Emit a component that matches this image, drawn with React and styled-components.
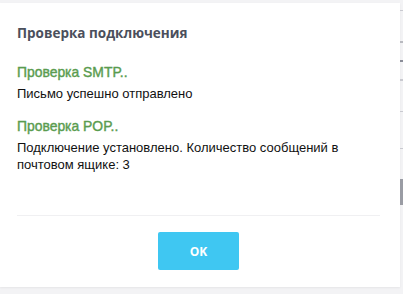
import React from "react";
import styled, { createGlobalStyle } from "styled-components";

const GlobalStyle = createGlobalStyle`
  html, body {
    margin: 0;
    padding: 0;
    background: #f3f3f5;
  }
  body {
    font-family: "Liberation Sans", Arial, sans-serif;
  }
`;

const Page = styled.div`
  width: 403px;
  height: 294px;
  display: flex;
  align-items: flex-start;
  padding-top: 3px;
  box-sizing: border-box;
`;

const Modal = styled.div`
  width: 400px;
  height: 284px;
  background: #ffffff;
  box-shadow: 0 1px 2px rgba(0, 0, 0, 0.06);
  display: flex;
  flex-direction: column;
  box-sizing: border-box;
  padding: 0 20px 0 17px;
`;

const Title = styled.h3`
  margin: 21px 0 0;
  font-family: "Open Sans", sans-serif;
  font-size: 13.5px;
  font-weight: 700;
  color: #4b4f5c;
  line-height: 18px;
`;

const Body = styled.div`
  margin-top: 21px;
  flex: 1;
  display: flex;
  flex-direction: column;
`;

const Step = styled.div`
  display: flex;
  flex-direction: column;
  margin-bottom: ${(p) => p.gap || 0}px;
`;

const StepTitle = styled.div`
  font-size: 13.9px;
  font-weight: 400;
  -webkit-text-stroke: 0.4px #5a9c4f;
  color: #5a9c4f;
  line-height: 18px;
  margin-bottom: 4px;
`;

const StepText = styled.div`
  font-size: 13px;
  color: #111111;
  line-height: 17px;
`;

const Footer = styled.div`
  border-top: 1px solid #f0f0f2;
  height: 72px;
  display: flex;
  justify-content: center;
  align-items: flex-start;
  padding-top: 16px;
  box-sizing: border-box;
`;

const Button = styled.button`
  width: 81px;
  height: 38px;
  border: none;
  border-radius: 2px;
  background: #3fc7f2;
  color: #ffffff;
  font-family: "Open Sans", sans-serif;
  font-size: 12px;
  font-weight: 700;
  cursor: pointer;
`;

const SideMarks = styled.div`
  position: relative;
  flex: 1;
  height: 100%;
`;

const Mark = styled.div`
  position: absolute;
  left: 0;
  right: 0;
  top: ${(p) => p.top}px;
  height: ${(p) => p.h || 1}px;
  background: ${(p) => p.color || "#c9cad0"};
`;

export default function App() {
  return (
    <>
      <GlobalStyle />
      <Page>
        <Modal>
          <Title>Проверка подключения</Title>
          <Body>
            <Step gap={15}>
              <StepTitle>Проверка SMTP..</StepTitle>
              <StepText>Письмо успешно отправлено</StepText>
            </Step>
            <Step>
              <StepTitle>Проверка POP..</StepTitle>
              <StepText>
                Подключение установлено. Количество сообщений в почтовом ящике: 3
              </StepText>
            </Step>
          </Body>
          <Footer>
            <Button>OK</Button>
          </Footer>
        </Modal>
        <SideMarks>
          <Mark top={7} />
          <Mark top={38} h={2} color="#b9bac0" />
          <Mark top={57} h={2} color="#8a8d98" />
          <Mark top={76} h={2} />
          <Mark top={108} />
          <Mark top={145} />
          <Mark top={176} h={26} color="#9a9ca4" />
        </SideMarks>
      </Page>
    </>
  );
}
